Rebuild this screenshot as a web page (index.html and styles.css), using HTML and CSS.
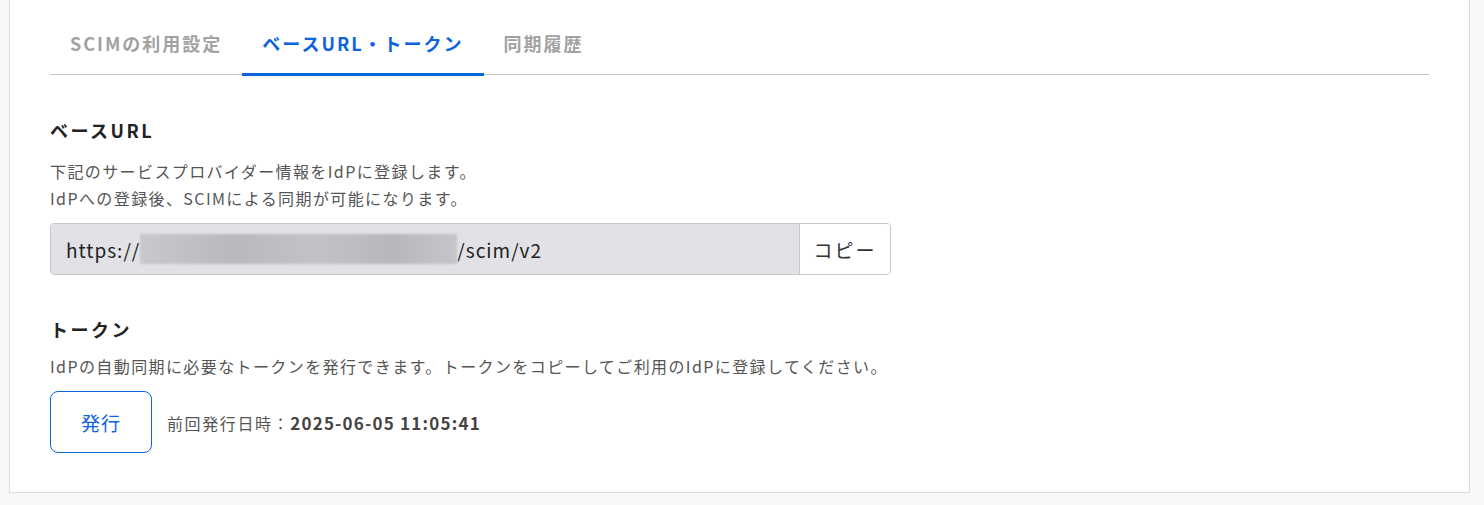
FILE: index.html
```html
<!DOCTYPE html>
<html lang="ja">
<head>
  <meta charset="UTF-8">
  <meta name="viewport" content="width=device-width, initial-scale=1.0">
  <title>SCIM設定</title>
  <link rel="stylesheet" href="styles.css">
</head>
<body>
  <div class="panel">
    <nav class="tabs">
      <a class="tab">SCIMの利用設定</a>
      <a class="tab active">ベースURL・トークン</a>
      <a class="tab">同期履歴</a>
    </nav>

    <section class="section">
      <h2>ベースURL</h2>
      <p class="desc">下記のサービスプロバイダー情報をIdPに登録します。<br>IdPへの登録後、SCIMによる同期が可能になります。</p>
      <div class="url-group">
        <div class="url-field">https://<span class="masked"></span>/scim/v2</div>
        <button type="button" class="copy-btn">コピー</button>
      </div>
    </section>

    <section class="section token">
      <h2>トークン</h2>
      <p class="desc">IdPの自動同期に必要なトークンを発行できます。トークンをコピーしてご利用のIdPに登録してください。</p>
      <div class="issue-row">
        <button type="button" class="issue-btn">発行</button>
        <span class="last-issued">前回発行日時：<b>2025-06-05 11:05:41</b></span>
      </div>
    </section>
  </div>
</body>
</html>
```

FILE: styles.css
```css
body {
  margin: 0;
  background-color: #f8f8f8;
  font-family: "Noto Sans CJK JP", "Noto Sans", sans-serif;
  color: #333;
}

.panel {
  background: #fff;
  border: 1px solid #dcdcdc;
  border-top: none;
  margin: 0 14px 0 9px;
  padding: 22px 40px 38px;
  height: 493px;
  box-sizing: border-box;
}

.tabs {
  display: flex;
  border-bottom: 1px solid #c4c4c4;
}

.tab {
  padding: 8px 20px 17px;
  font-size: 18px;
  font-weight: bold;
  letter-spacing: 2px;
  color: #a2a2a2;
  border-bottom: 3px solid transparent;
  margin-bottom: -2px;
  cursor: pointer;
  line-height: 26px;
}

.tab.active {
  color: #0b63de;
  border-bottom-color: #0b63de;
}

.section h2 {
  margin: 0;
  font-size: 18px;
  letter-spacing: 2.5px;
  color: #222;
  line-height: 26px;
}

.section {
  padding-top: 42px;
}

.section.token {
  padding-top: 41px;
}

.desc {
  margin: 15px 0 11px;
  font-size: 16px;
  letter-spacing: 1.4px;
  line-height: 27px;
  color: #555;
}

.token .desc {
  margin: 11px 0 11px;
}

.url-group {
  display: flex;
  width: 841px;
  height: 52px;
  border: 1px solid #c8c8c8;
  border-radius: 4px;
  box-sizing: border-box;
  overflow: hidden;
}

.url-field {
  flex: 1;
  background: #e1e1e6;
  display: flex;
  align-items: center;
  padding-left: 15px;
  font-size: 19px;
  letter-spacing: 1px;
  color: #222;
}

.masked {
  display: inline-block;
  width: 317px;
  height: 30px;
  background: linear-gradient(90deg, #c9c9cd, #b9b9bd 30%, #c3c3c7 55%, #b8b8bc 80%, #c6c6ca);
  filter: blur(1px);
}

.copy-btn {
  width: 91px;
  border: none;
  border-left: 1px solid #c8c8c8;
  background: #fff;
  font-family: inherit;
  font-size: 19px;
  letter-spacing: 2px;
  color: #333;
  cursor: pointer;
}

.issue-row {
  display: flex;
  align-items: center;
  gap: 15px;
}

.issue-btn {
  width: 102px;
  height: 62px;
  background: #fff;
  border: 1px solid #0b63de;
  border-radius: 8px;
  color: #0b63de;
  font-family: inherit;
  font-size: 19px;
  letter-spacing: 1px;
  cursor: pointer;
}

.last-issued {
  font-size: 16px;
  letter-spacing: 1.6px;
  color: #555;
}

.last-issued b {
  font-size: 17px;
  color: #444;
  letter-spacing: 1.2px;
}
```
